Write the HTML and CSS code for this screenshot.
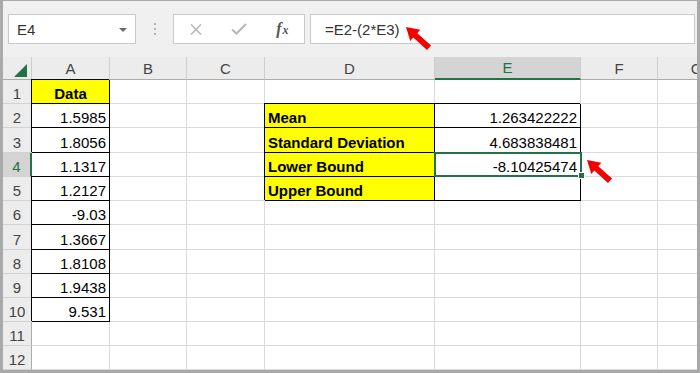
FILE: index.html
```html
<!DOCTYPE html>
<html>
<head>
<meta charset="utf-8">
<link rel="stylesheet" href="styles.css">
</head>
<body>
<div class="frame">
  <div class="toolbar">
    <div class="namebox"><span>E4</span><span class="caret"></span></div>
    <div class="grip"><i></i><i></i><i></i></div>
    <div class="fnbox">
      <span class="ico"><svg width="12" height="11" viewBox="0 0 12 11"><path d="M1 0.5L11 10.5M11 0.5L1 10.5" stroke="#b9b9b9" stroke-width="1.6" fill="none"/></svg></span>
      <span class="ico"><svg width="16" height="12" viewBox="0 0 16 12"><path d="M1 6.5L5.5 10.5L15 1" stroke="#b9b9b9" stroke-width="2.2" fill="none"/></svg></span>
      <span class="ico fx"><i>f</i><i class="fx-x">x</i></span>
    </div>
    <div class="formula">=E2-(2*E3)</div>
  </div>
  <div class="sheet">
    <div class="c hd corner"><svg width="13" height="13" viewBox="0 0 13 13"><polygon points="13,0 13,13 0,13" fill="#217346"/></svg></div>
    <div class="c hd">A</div><div class="c hd">B</div><div class="c hd">C</div><div class="c hd">D</div><div class="c hd hsel colsel">E</div><div class="c hd">F</div><div class="c hd">G</div>

    <div class="c rh">1</div><div class="c y bx ctr">Data</div><div class="c"></div><div class="c"></div><div class="c"></div><div class="c"></div><div class="c"></div><div class="c"></div>
    <div class="c rh">2</div><div class="c r bx">1.5985</div><div class="c"></div><div class="c"></div><div class="c y bx">Mean</div><div class="c r bx">1.263422222</div><div class="c"></div><div class="c"></div>
    <div class="c rh">3</div><div class="c r bx">1.8056</div><div class="c"></div><div class="c"></div><div class="c y bx">Standard Deviation</div><div class="c r bx">4.683838481</div><div class="c"></div><div class="c"></div>
    <div class="c rh hsel rowsel">4</div><div class="c r bx nl">1.1317</div><div class="c"></div><div class="c"></div><div class="c y bx">Lower Bound</div><div class="c r bx sel">-8.10425474</div><div class="c"></div><div class="c"></div>
    <div class="c rh">5</div><div class="c r bx">1.2127</div><div class="c"></div><div class="c"></div><div class="c y bx">Upper Bound</div><div class="c r bx"></div><div class="c"></div><div class="c"></div>
    <div class="c rh">6</div><div class="c r bx">-9.03</div><div class="c"></div><div class="c"></div><div class="c"></div><div class="c"></div><div class="c"></div><div class="c"></div>
    <div class="c rh">7</div><div class="c r bx">1.3667</div><div class="c"></div><div class="c"></div><div class="c"></div><div class="c"></div><div class="c"></div><div class="c"></div>
    <div class="c rh">8</div><div class="c r bx">1.8108</div><div class="c"></div><div class="c"></div><div class="c"></div><div class="c"></div><div class="c"></div><div class="c"></div>
    <div class="c rh">9</div><div class="c r bx">1.9438</div><div class="c"></div><div class="c"></div><div class="c"></div><div class="c"></div><div class="c"></div><div class="c"></div>
    <div class="c rh">10</div><div class="c r bx">9.531</div><div class="c"></div><div class="c"></div><div class="c"></div><div class="c"></div><div class="c"></div><div class="c"></div>
    <div class="c rh">11</div><div class="c"></div><div class="c"></div><div class="c"></div><div class="c"></div><div class="c"></div><div class="c"></div><div class="c"></div>
    <div class="c rh">12</div><div class="c"></div><div class="c"></div><div class="c"></div><div class="c"></div><div class="c"></div><div class="c"></div><div class="c"></div>
  </div>
  <svg class="arrows" width="700" height="373" viewBox="0 0 700 373">
    <polygon transform="translate(406 27) rotate(42)" points="0,0 12.5,-7.5 12.5,-3 31,-3 31,3 12.5,3 12.5,7.5" fill="#f40000"/>
    <polygon transform="translate(587 160) rotate(42)" points="0,0 12.5,-7.5 12.5,-3 31,-3 31,3 12.5,3 12.5,7.5" fill="#f40000"/>
  </svg>
</div>
</body>
</html>
```

FILE: styles.css
```css
html, body {
  margin: 0;
  padding: 0;
  background: #fff;
}

.frame {
  position: relative;
  width: 700px;
  height: 373px;
  box-sizing: border-box;
  border-style: solid;
  border-color: #a9a9a9;
  border-width: 1px 3px 3px 3px;
  background: #f0f0f0;
  overflow: hidden;
  font-family: "Liberation Sans", Arial, sans-serif;
}

.toolbar {
  display: flex;
  align-items: flex-start;
  height: 56px;
  box-sizing: border-box;
  padding: 13px 0 0 5px;
}

.namebox {
  width: 128px;
  height: 30px;
  box-sizing: border-box;
  border: 1px solid #c9c9c9;
  background: #fff;
  display: flex;
  align-items: center;
  justify-content: space-between;
  padding: 1px 8px 0 8px;
  font-size: 15px;
  color: #333;
}

.caret {
  width: 0;
  height: 0;
  border-left: 4px solid transparent;
  border-right: 4px solid transparent;
  border-top: 4px solid #6a6a6a;
}

.grip {
  width: 37px;
  height: 30px;
  display: flex;
  flex-direction: column;
  align-items: center;
  justify-content: center;
  gap: 3px;
}

.grip i {
  display: block;
  width: 2px;
  height: 2px;
  background: #b5b5b5;
}

.fnbox {
  width: 132px;
  height: 30px;
  box-sizing: border-box;
  border: 1px solid #c9c9c9;
  background: #fff;
  display: flex;
  align-items: center;
}

.ico {
  width: 44px;
  display: flex;
  justify-content: center;
  align-items: center;
}

.fx {
  font-family: "Liberation Serif", "Times New Roman", serif;
  font-weight: bold;
  color: #555;
  align-items: baseline;
}

.fx i {
  font-size: 16px;
}

.fx .fx-x {
  font-size: 12px;
  margin-left: 1px;
}

.formula {
  margin-left: 5px;
  width: 385px;
  height: 30px;
  box-sizing: border-box;
  border: 1px solid #c9c9c9;
  background: #fff;
  padding: 1px 0 0 14px;
  display: flex;
  align-items: center;
  font-size: 15px;
  color: #333;
}

.sheet {
  display: grid;
  grid-template-columns: 29px 78px 77px 78px 170px 146px 77px 78px;
  grid-template-rows: 23px 24px 24px 25px 24px 24px 24px 25px 24px 24px 24px 24px 24px;
  background: #fff;
}

.c {
  box-sizing: border-box;
  border-right: 1px solid #dadada;
  border-bottom: 1px solid #dadada;
  background: #fff;
  display: flex;
  align-items: flex-end;
  padding: 0 3px 1px 3px;
  font-size: 15px;
  line-height: 17px;
  color: #000;
  white-space: nowrap;
}

.r {
  justify-content: flex-end;
}

.ctr {
  justify-content: center;
}

.hd {
  background: #ececec;
  border-right-color: #cdcdcd;
  border-bottom-color: #ababab;
  justify-content: center;
  align-items: center;
  padding: 0;
  color: #444;
}

.corner {
  justify-content: flex-end;
  align-items: flex-end;
  padding: 0 4px 2px 0;
}

.rh {
  background: #ececec;
  border-right-color: #ababab;
  border-bottom-color: #d2d2d2;
  justify-content: center;
  padding: 0 0 1px 0;
  color: #444;
}

.hsel {
  background: #d4d4d4;
  color: #217346;
}

.colsel {
  border-bottom: 2px solid #217346;
}

.rowsel {
  border-right: 2px solid #217346;
}

.y {
  background: #ffff00;
  font-weight: bold;
}

.bx {
  border-right-color: #000;
  border-bottom-color: #000;
  box-shadow: -1px -1px 0 #000;
}

.bx.nl {
  box-shadow: 0 -1px 0 #000;
}

.sel {
  position: relative;
  z-index: 1;
}

.sel::after {
  content: "";
  position: absolute;
  left: -1px;
  top: -1px;
  right: -2px;
  bottom: -1px;
  border: 2px solid #217346;
}

.sel::before {
  content: "";
  position: absolute;
  right: -5px;
  bottom: -3px;
  width: 5px;
  height: 5px;
  background: #217346;
  border: 1px solid #fff;
  z-index: 1;
}

.arrows {
  position: absolute;
  left: -3px;
  top: -1px;
  z-index: 2;
}
```
